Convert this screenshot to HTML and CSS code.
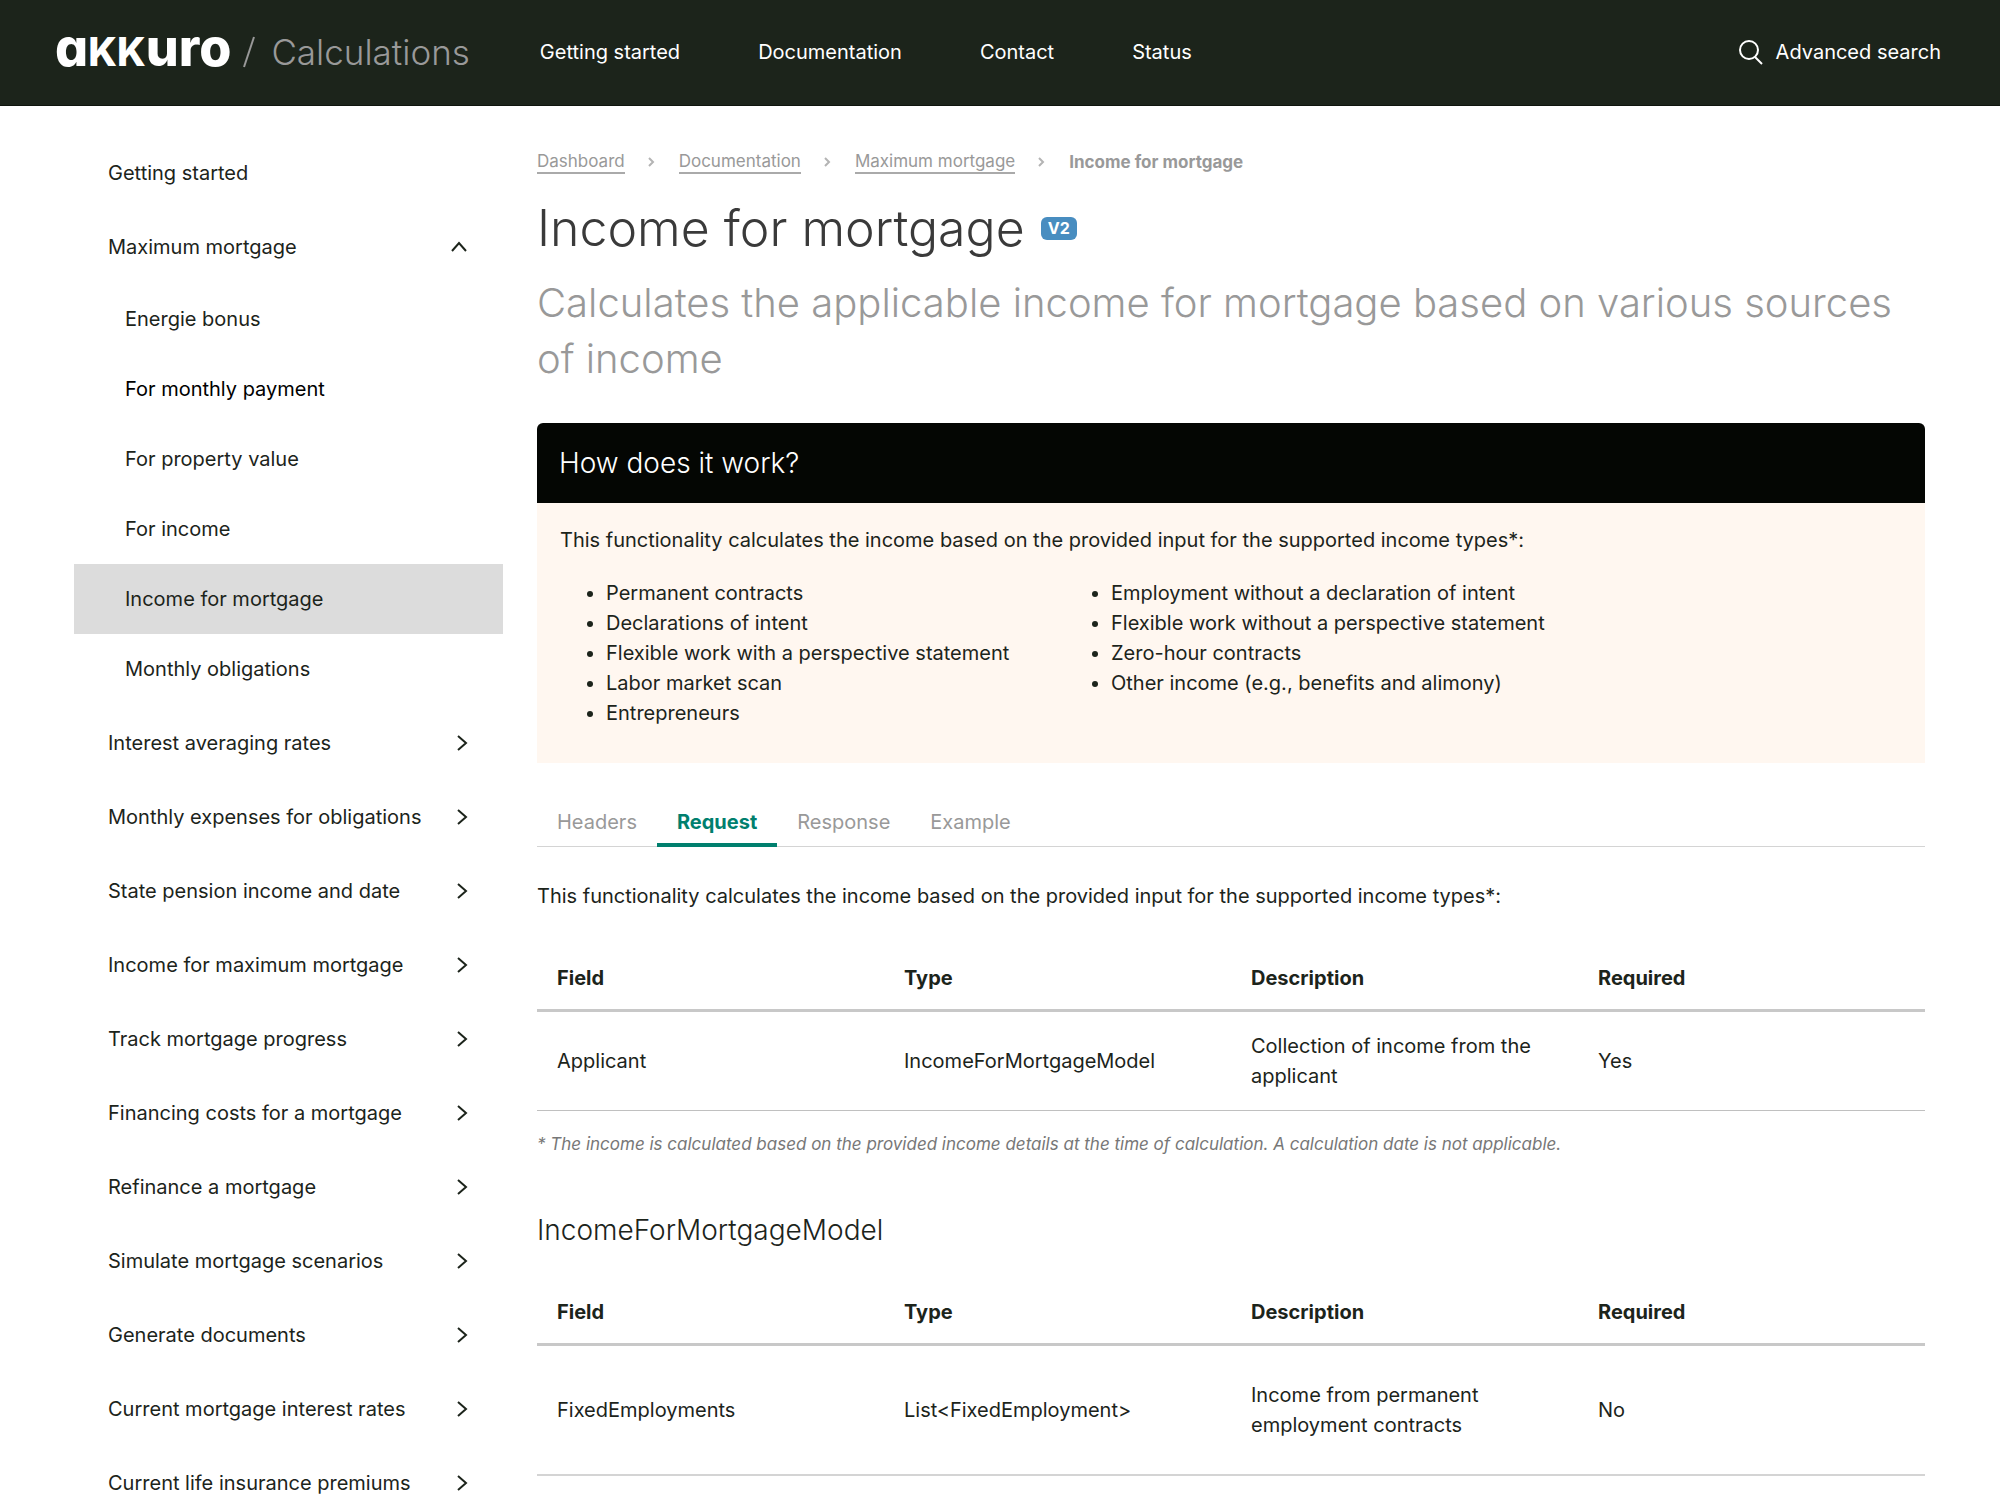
FILE: index.html
```html
<!DOCTYPE html>
<html lang="en">
<head>
<meta charset="utf-8">
<meta name="viewport" content="width=device-width, initial-scale=1">
<title>Income for mortgage – Akkuro Calculations</title>
<link rel="stylesheet" href="styles.css">
</head>
<body>
<svg class="sprite" aria-hidden="true">
  <symbol id="chevron-right" viewBox="0 0 12 18"><path d="M2 2l8 7-8 7"/></symbol>
  <symbol id="chevron-up" viewBox="0 0 18 12"><path d="M2 10l7-8 7 8"/></symbol>
  <symbol id="crumb" viewBox="0 0 8 12"><path d="M1 2l4 4-4 4"/></symbol>
</svg>

<header class="topbar">
  <a class="brand" href="#">
    <span class="logo">a<span class="logo-caps">kk</span>uro</span>
    <svg class="slash" viewBox="0 0 12 32" aria-hidden="true"><path d="M11 1L1 31"/></svg>
    <span class="product">Calculations</span>
  </a>
  <nav class="main-nav" aria-label="Main">
    <a href="#">Getting started</a>
    <a href="#">Documentation</a>
    <a href="#">Contact</a>
    <a href="#">Status</a>
  </nav>
  <a class="search" href="#">
    <svg class="search-icon" viewBox="0 0 26 26" aria-hidden="true"><circle cx="11" cy="11" r="9"/><path d="M17 18l7 7"/></svg>
    Advanced search
  </a>
</header>

<div class="page">
  <nav class="sidebar" aria-label="Documentation">
    <ul class="menu">
      <li><a class="item" href="#">Getting started</a></li>
      <li>
        <a class="item" href="#">Maximum mortgage <svg class="up"><use href="#chevron-up"/></svg></a>
        <ul class="submenu">
          <li><a class="subitem" href="#">Energie bonus</a></li>
          <li><a class="subitem hovered" href="#">For monthly payment</a></li>
          <li><a class="subitem" href="#">For property value</a></li>
          <li><a class="subitem" href="#">For income</a></li>
          <li><a class="subitem active" href="#" aria-current="page">Income for mortgage</a></li>
          <li><a class="subitem" href="#">Monthly obligations</a></li>
        </ul>
      </li>
      <li><a class="item" href="#">Interest averaging rates <svg class="right"><use href="#chevron-right"/></svg></a></li>
      <li><a class="item" href="#">Monthly expenses for obligations <svg class="right"><use href="#chevron-right"/></svg></a></li>
      <li><a class="item" href="#">State pension income and date <svg class="right"><use href="#chevron-right"/></svg></a></li>
      <li><a class="item" href="#">Income for maximum mortgage <svg class="right"><use href="#chevron-right"/></svg></a></li>
      <li><a class="item" href="#">Track mortgage progress <svg class="right"><use href="#chevron-right"/></svg></a></li>
      <li><a class="item" href="#">Financing costs for a mortgage <svg class="right"><use href="#chevron-right"/></svg></a></li>
      <li><a class="item" href="#">Refinance a mortgage <svg class="right"><use href="#chevron-right"/></svg></a></li>
      <li><a class="item" href="#">Simulate mortgage scenarios <svg class="right"><use href="#chevron-right"/></svg></a></li>
      <li><a class="item" href="#">Generate documents <svg class="right"><use href="#chevron-right"/></svg></a></li>
      <li><a class="item" href="#">Current mortgage interest rates <svg class="right"><use href="#chevron-right"/></svg></a></li>
      <li><a class="item" href="#">Current life insurance premiums <svg class="right"><use href="#chevron-right"/></svg></a></li>
    </ul>
  </nav>

  <main class="content">
    <nav class="crumbs" aria-label="Breadcrumb">
      <a href="#">Dashboard</a>
      <svg><use href="#crumb"/></svg>
      <a href="#">Documentation</a>
      <svg><use href="#crumb"/></svg>
      <a href="#">Maximum mortgage</a>
      <svg><use href="#crumb"/></svg>
      <strong>Income for mortgage</strong>
    </nav>

    <div class="title-row">
      <h1>Income for mortgage</h1>
      <span class="badge">V2</span>
    </div>
    <p class="lead">Calculates the applicable income for mortgage based on various sources of income</p>

    <section class="panel">
      <h2 class="panel-title">How does it work?</h2>
      <div class="panel-body">
        <p>This functionality calculates the income based on the provided input for the supported income types*:</p>
        <div class="columns">
          <ul>
            <li>Permanent contracts</li>
            <li>Declarations of intent</li>
            <li>Flexible work with a perspective statement</li>
            <li>Labor market scan</li>
            <li>Entrepreneurs</li>
          </ul>
          <ul>
            <li>Employment without a declaration of intent</li>
            <li>Flexible work without a perspective statement</li>
            <li>Zero-hour contracts</li>
            <li>Other income (e.g., benefits and alimony)</li>
          </ul>
        </div>
      </div>
    </section>

    <div class="tabs" role="tablist">
      <button type="button" role="tab" aria-selected="false">Headers</button>
      <button type="button" role="tab" aria-selected="true">Request</button>
      <button type="button" role="tab" aria-selected="false">Response</button>
      <button type="button" role="tab" aria-selected="false">Example</button>
    </div>

    <p class="intro">This functionality calculates the income based on the provided input for the supported income types*:</p>

    <table>
      <thead>
        <tr><th scope="col">Field</th><th scope="col">Type</th><th scope="col">Description</th><th scope="col">Required</th></tr>
      </thead>
      <tbody>
        <tr><td>Applicant</td><td>IncomeForMortgageModel</td><td>Collection of income from the applicant</td><td>Yes</td></tr>
      </tbody>
    </table>
    <p class="footnote">* The income is calculated based on the provided income details at the time of calculation. A calculation date is not applicable.</p>

    <h2 class="model">IncomeForMortgageModel</h2>
    <table class="roomy">
      <thead>
        <tr><th scope="col">Field</th><th scope="col">Type</th><th scope="col">Description</th><th scope="col">Required</th></tr>
      </thead>
      <tbody>
        <tr><td>FixedEmployments</td><td>List&lt;FixedEmployment&gt;</td><td>Income from permanent employment contracts</td><td>No</td></tr>
      </tbody>
    </table>
  </main>
</div>
</body>
</html>
```
FILE: styles.css
```css
* {
  box-sizing: border-box;
}

body {
  margin: 0;
  background: #fff;
  color: #1c241b;
  font: 400 20px/30px Inter, "Liberation Sans", sans-serif;
}

a {
  color: inherit;
  text-decoration: none;
}

h1, h2, p, ul {
  margin: 0;
  padding: 0;
}

svg {
  flex: none;
  fill: none;
  stroke: currentColor;
}

.sprite {
  display: none;
}

/* Top bar */
.topbar {
  display: flex;
  align-items: center;
  min-height: 106px;
  padding: 0 59px 2px 55px;
  border-bottom: 1px solid #0f150e;
  background: #1c241b;
  color: #fff;
}

.brand {
  display: flex;
  align-items: center;
}

.logo {
  margin-top: -3px;
  font-size: 52px;
  font-weight: 800;
  line-height: 52px;
  font-feature-settings: "cv11";
}

.logo-caps {
  font-size: 39px;
  text-transform: uppercase;
}

.slash {
  width: 12px;
  height: 32px;
  margin: 0 16px 0 12px;
  color: #999;
  stroke-width: 2;
}

.product {
  color: #999;
  font-size: 35px;
  font-weight: 300;
}

.main-nav {
  display: flex;
  gap: 78px;
  margin-left: 70px;
}

.search {
  display: flex;
  align-items: center;
  gap: 12px;
  margin-left: auto;
}

.search-icon {
  width: 26px;
  height: 26px;
  stroke-width: 2;
}

/* Page columns */
.page {
  display: flex;
  align-items: flex-start;
  gap: 34px;
  padding: 0 75px 24px 74px;
}

.sidebar {
  flex: none;
  width: 429px;
  padding-top: 30px;
}

.menu, .submenu {
  list-style: none;
}

.submenu {
  padding-bottom: 2px;
}

.item {
  display: flex;
  align-items: center;
  justify-content: space-between;
  padding: 22px 35px 22px 34px;
}

.item svg {
  stroke-width: 2;
}

.right {
  width: 12px;
  height: 18px;
}

.up {
  width: 18px;
  height: 12px;
}

.subitem {
  display: block;
  padding: 20px 51px;
}

.hovered {
  color: #000;
}

.active {
  background: #dcdcdc;
}

.content {
  flex: 1;
  min-width: 0;
  padding-top: 44px;
}

/* Title block */
.crumbs {
  display: flex;
  align-items: center;
  gap: 23px;
  color: #999;
  font-size: 17px;
  line-height: 22px;
}

.crumbs a {
  border-bottom: 2px solid #aaa;
}

.crumbs svg {
  width: 8px;
  height: 12px;
  color: #b4b4b4;
  stroke-width: 2;
}

.title-row {
  display: flex;
  align-items: center;
  gap: 16px;
  margin-top: 24px;
}

h1 {
  color: #3a3a3a;
  font-size: 50px;
  font-weight: 300;
  line-height: 60px;
}

.badge {
  padding: 0 7px;
  border-radius: 6px;
  background: #488dc0;
  color: #fff;
  font-size: 16px;
  font-weight: 700;
  line-height: 23px;
}

.lead {
  margin-top: 17px;
  color: #999;
  font-size: 40px;
  font-weight: 300;
  line-height: 56px;
}

/* Explanation panel */
.panel {
  margin-top: 36px;
}

.panel-title {
  padding: 22px;
  border-radius: 6px 6px 0 0;
  background: #040603;
  color: #fff;
  font-size: 28px;
  font-weight: 300;
  line-height: 36px;
}

.panel-body {
  padding: 22px 23px 35px;
  background: #fff7f0;
}

.columns {
  display: grid;
  grid-template-columns: minmax(0, 505px) 1fr;
  margin-top: 23px;
}

.columns ul {
  padding-left: 46px;
}

/* Tabs */
.tabs {
  display: flex;
  margin-top: 34px;
  box-shadow: inset 0 -1px #d4d4d4;
}

.tabs button {
  padding: 10px 20px 6px;
  border: 0;
  border-bottom: 4px solid transparent;
  background: none;
  color: #999;
  font: inherit;
}

.tabs [aria-selected="true"] {
  border-color: #007f6e;
  color: #007f6e;
  font-weight: 700;
}

.intro {
  margin: 34px 0;
}

/* Field tables */
table {
  width: 100%;
  border-collapse: separate;
  border-spacing: 0;
  table-layout: fixed;
}

th, td {
  padding: 19px 20px;
  border-bottom: 1px solid #c0c0c0;
  text-align: left;
}

th {
  padding: 18px 20px 16px;
  border-bottom: 3px solid #c8c8c8;
  font-weight: 700;
}

.roomy td {
  padding: 34px 20px;
  border-bottom: 2px solid #d4d4d4;
}

.footnote {
  margin-top: 18px;
  color: #777;
  font-size: 17px;
  font-style: italic;
}

.model {
  margin: 53px 0 49px;
  font-size: 28px;
  font-weight: 300;
  line-height: 36px;
}

.model + table th {
  padding-top: 0;
}
```
